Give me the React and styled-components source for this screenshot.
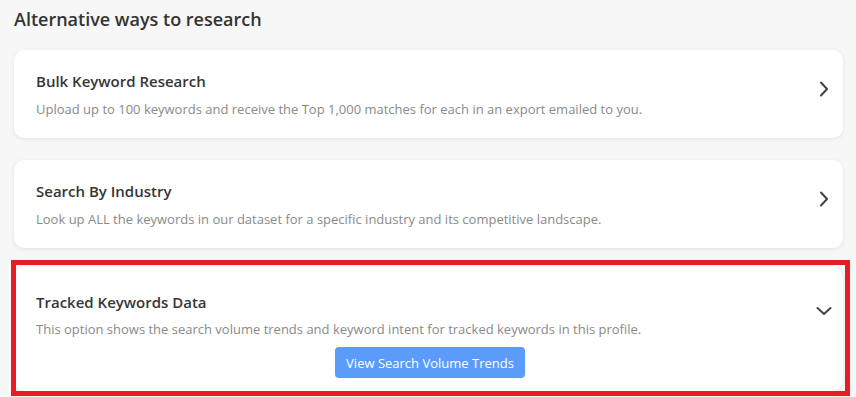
import React from "react";
import styled, { createGlobalStyle } from "styled-components";

const GlobalStyle = createGlobalStyle`
  html, body { margin: 0; padding: 0; background: #f7f7f7; }
  body { font-family: "Open Sans", "Noto Sans", sans-serif; -webkit-font-smoothing: antialiased; }
`;

const Page = styled.div`
  padding: 0 13px 20px 14px;
  display: flex;
  flex-direction: column;
`;

const Heading = styled.h2`
  margin: 7px 0 19px;
  font-size: 18px;
  line-height: 24px;
  font-weight: 600;
  color: #333333;
`;

const List = styled.div`
  display: flex;
  flex-direction: column;
  gap: 22px;
`;

const Card = styled.div`
  position: relative;
  background: #ffffff;
  border-radius: 10px;
  box-shadow: 0 1px 4px rgba(0, 0, 0, 0.09);
  padding: ${(p) => (p.$expanded ? "25px 19px 13px 22px" : "21px 19px 20px 22px")};
  margin-top: ${(p) => (p.$expanded ? "-3px" : "0")};
  display: flex;
  flex-direction: column;

  ${(p) =>
    p.$highlighted &&
    `
    &::after {
      content: "";
      position: absolute;
      top: -7px;
      bottom: -5px;
      left: -3px;
      right: -7px;
      border: 5px solid #e81c24;
      pointer-events: none;
    }
  `}
`;

const Row = styled.div`
  display: flex;
  align-items: flex-start;
  justify-content: space-between;
`;

const Text = styled.div`
  display: flex;
  flex-direction: column;
  gap: ${(p) => (p.$tight ? "8px" : "9px")};
`;

const Title = styled.div`
  font-size: 15px;
  line-height: 20px;
  font-weight: 600;
  color: #363636;
`;

const Description = styled.div`
  font-size: 13px;
  line-height: 18px;
  font-weight: 400;
  color: #8a8a8a;
`;

const IconWrap = styled.div`
  display: flex;
  align-items: center;
  justify-content: center;
  width: 16px;
  height: 16px;
  margin-top: ${(p) => p.$top}px;
  margin-right: -8px;
  color: #444444;
`;

const Button = styled.button`
  align-self: center;
  margin-top: 9px;
  height: 31px;
  padding: 0 11px;
  border: none;
  border-radius: 4px;
  background: #5b9cfa;
  color: #ffffff;
  font-family: "Open Sans", "Noto Sans", sans-serif;
  font-size: 13px;
  font-weight: 400;
  cursor: pointer;
`;

const ChevronRight = () => (
  <svg width="10" height="16" viewBox="0 0 10 16" fill="none">
    <polyline points="2,1.5 8,8 2,14.5" stroke="currentColor" strokeWidth="2" strokeLinecap="round" strokeLinejoin="round" />
  </svg>
);

const ChevronDown = () => (
  <svg width="16" height="10" viewBox="0 0 16 10" fill="none">
    <polyline points="1.5,2 8,8 14.5,2" stroke="currentColor" strokeWidth="2" strokeLinecap="round" strokeLinejoin="round" />
  </svg>
);

const items = [
  {
    title: "Bulk Keyword Research",
    desc: "Upload up to 100 keywords and receive the Top 1,000 matches for each in an export emailed to you.",
  },
  {
    title: "Search By Industry",
    desc: "Look up ALL the keywords in our dataset for a specific industry and its competitive landscape.",
  },
];

export default function App() {
  return (
    <>
      <GlobalStyle />
      <Page>
        <Heading>Alternative ways to research</Heading>
        <List>
          {items.map((it) => (
            <Card key={it.title}>
              <Row>
                <Text>
                  <Title>{it.title}</Title>
                  <Description>{it.desc}</Description>
                </Text>
                <IconWrap $top={10}>
                  <ChevronRight />
                </IconWrap>
              </Row>
            </Card>
          ))}
          <Card $expanded $highlighted>
            <Row>
              <Text $tight>
                <Title>Tracked Keywords Data</Title>
                <Description>
                  This option shows the search volume trends and keyword intent for tracked keywords in this profile.
                </Description>
              </Text>
              <IconWrap $top={11}>
                <ChevronDown />
              </IconWrap>
            </Row>
            <Button>View Search Volume Trends</Button>
          </Card>
        </List>
      </Page>
    </>
  );
}
